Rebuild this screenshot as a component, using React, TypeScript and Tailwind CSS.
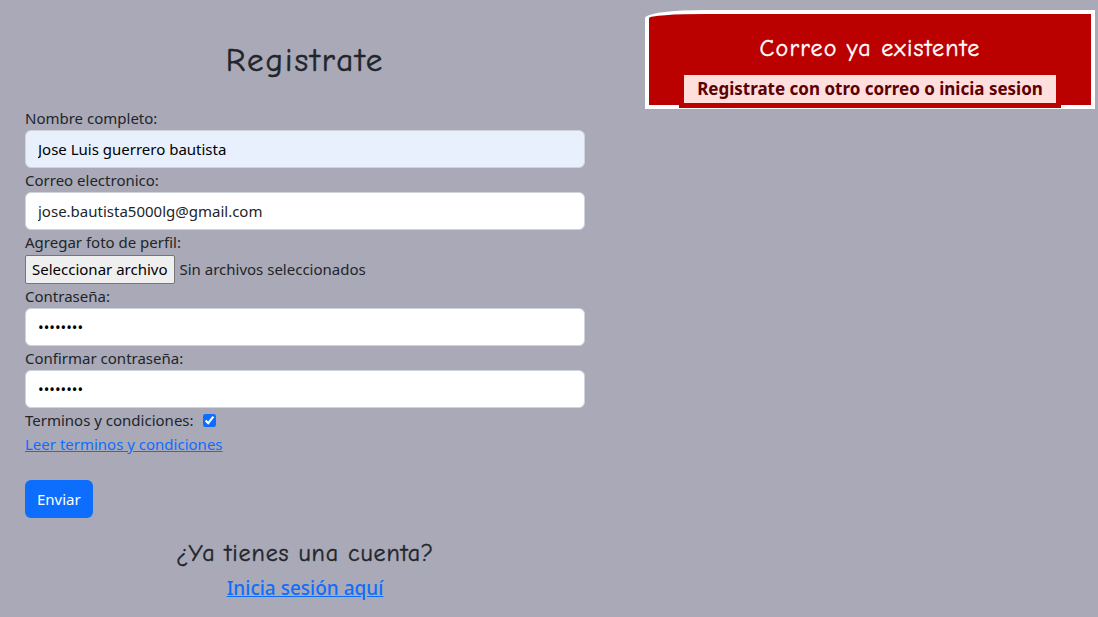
import React from "react";

const comic = { fontFamily: '"Comic Sans MS", "Comic Neue", cursive' };

function Field({ label, children }: { label: string; children: React.ReactNode }) {
  return (
    <div>
      <label className="block leading-6">{label}</label>
      {children}
    </div>
  );
}

export default function App() {
  return (
    <div
      className="min-h-screen bg-[#a9a9b8] flex items-start text-[#212529] text-[15px]"
      style={{ fontFamily: '"Noto Sans", "Open Sans", sans-serif' }}
    >
      <main className="w-[560px] ml-[25px]">
        <h2
          className="text-[33px] tracking-[2px] leading-[40px] text-center mt-[40px] mb-[26px] [-webkit-text-stroke:0.5px_currentColor]"
          style={comic}
        >
          Registrate
        </h2>

        <form className="flex flex-col">
          <Field label="Nombre completo:">
            <input
              type="text"
              readOnly
              defaultValue="Jose Luis guerrero bautista"
              className="w-full h-[38px] px-3 rounded-md border border-[#ced4da] bg-[#e8f0fe] text-black outline-none"
            />
          </Field>
          <Field label="Correo electronico:">
            <input
              type="email"
              readOnly
              defaultValue="jose.bautista5000lg@gmail.com"
              className="w-full h-[38px] px-3 rounded-md border border-[#ced4da] bg-white text-[#212529] outline-none"
            />
          </Field>
          <Field label="Agregar foto de perfil:">
            <div className="flex items-center gap-[5px] h-[30px]">
              <button
                type="button"
                className="h-[29px] px-[6px] bg-[#efefef] border border-[#767676] rounded-[2px] text-black text-[15px]"
              >
                Seleccionar archivo
              </button>
              <span className="text-[15px]">Sin archivos seleccionados</span>
            </div>
          </Field>
          <Field label="Contraseña:">
            <input
              type="password"
              readOnly
              defaultValue="12345678"
              className="w-full h-[38px] px-3 rounded-md border border-[#ced4da] bg-white text-black outline-none"
            />
          </Field>
          <Field label="Confirmar contraseña:">
            <input
              type="password"
              readOnly
              defaultValue="12345678"
              className="w-full h-[38px] px-3 rounded-md border border-[#ced4da] bg-white text-black outline-none"
            />
          </Field>
          <div className="flex items-center gap-[9px] leading-6">
            <span>Terminos y condiciones:</span>
            <input type="checkbox" defaultChecked className="w-[13px] h-[13px] accent-[#0d6efd]" />
          </div>
          <a href="#" className="leading-6 text-[#0d6efd] underline">
            Leer terminos y condiciones
          </a>
          <div className="mt-6">
            <button type="button" className="h-[38px] px-3 rounded-md bg-[#0d6efd] text-white">
              Enviar
            </button>
          </div>
        </form>

        <div className="text-center mt-[18px]">
          <h3
            className="text-2xl tracking-[0.9px] leading-[34px] [-webkit-text-stroke:0.4px_currentColor]"
            style={comic}
          >
            ¿Ya tienes una cuenta?
          </h3>
          <a href="#" className="inline-block mt-[4px] text-[19px] font-medium text-[#0d6efd] underline">
            Inicia sesión aquí
          </a>
        </div>
      </main>

      <div className="ml-auto mr-[3px] mt-[10px] w-[450px] border-4 border-white bg-[#bb0000] rounded-tl-[60px_8px] flex flex-col items-center">
        <h4
          className="text-white text-2xl tracking-[1.2px] leading-8 pt-[18px] mb-[6px] [-webkit-text-stroke:0.4px_currentColor]"
          style={comic}
        >
          Correo ya existente
        </h4>
        <p className="relative -mb-[3px] w-[382px] border-[5px] border-[#bb0000] bg-[#ffdede] text-[#5c0000] font-bold text-[17px] leading-[28px] text-center">
          Registrate con otro correo o inicia sesion
        </p>
      </div>
    </div>
  );
}
